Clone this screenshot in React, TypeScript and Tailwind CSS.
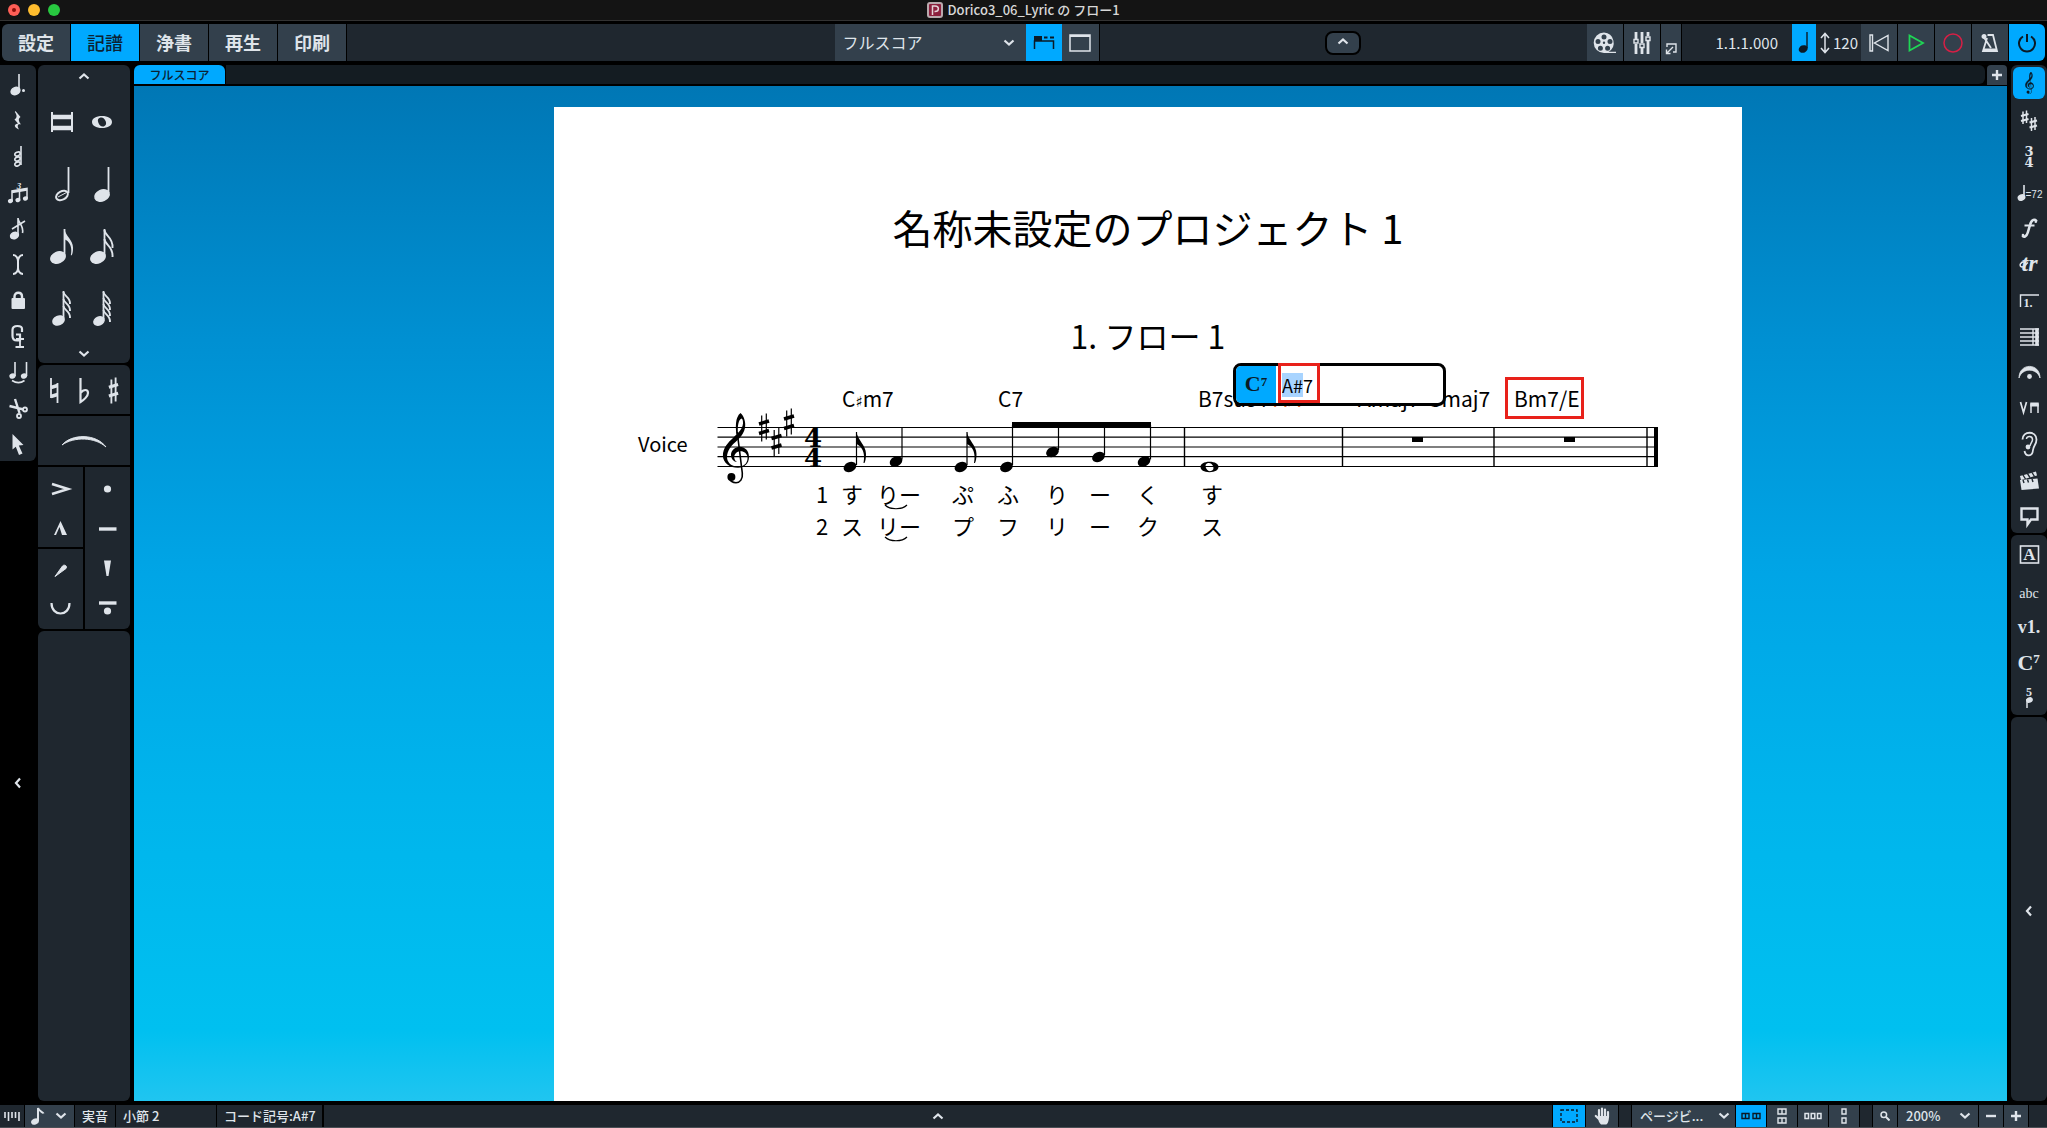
import { useEffect, useRef } from "react"
import type { ReactNode } from "react"

const CLEF =
  "M14.5 22C13.5 15 13 4 18.5 0C22 3 24 9 23 15C21.5 23 14 28 9.5 33C4.5 39 4 45 6.5 49C9 53 14 54 18 53.5C23 53 26 49 25.5 44C25 40 21.5 37.8 18 38.2C14 38.6 11.8 42 12.3 45C12.6 47 13.6 48.2 15 49C12 48.8 9 46 9 42C9 37.5 13 34 17.6 33.8C23 33.8 27 38 27 44C27 50.5 22.5 54.8 16 54.8C8 54.8 .9 50 .9 42.5C.9 35 6 29.5 11.5 24.5C16 20 20.5 16 21 10.5C21.2 8 20.5 5.5 19.5 5.5C16.5 6.5 15.3 13 16 21Z"

const FLAG = "M0 0C1 8 9.500 13 9.500 22C9.500 26 9 29 8 31L7 31C8 26 8 20 4.500 15.500C3 13.500 1 12.500 0 12Z"

function Clef() {
  return (
    <g fill="currentColor">
      <path d={CLEF} />
      <path d="M15.200 19L20.300 60C21 66 18 69.700 14 69.700C11 69.700 8 68 7.500 65" fill="none" stroke="currentColor" strokeWidth={1.6} />
      <circle cx={9.4} cy={64} r={4} />
    </g>
  )
}

function Head({ x, y, rx = 6.6, ry = 4.8 }: { x: number; y: number; rx?: number; ry?: number }) {
  return <ellipse cx={x} cy={y} rx={rx} ry={ry} transform={`rotate(-24 ${x} ${y})`} fill="currentColor" />
}

function Sharp({ x, y, s = 1, bold = false }: { x: number; y: number; s?: number; bold?: boolean }) {
  const thin = bold ? 2 : 1.2
  return (
    <g transform={`translate(${x} ${y}) scale(${s})`} stroke="currentColor" fill="none">
      <path d="M-2.300 -12V14M2.300 -14V12" strokeWidth={thin} />
      <path d="M-5 -3.500L5 -6.500M-5 6L5 3" strokeWidth={3.4} />
    </g>
  )
}

function Icon({ w = 36, h = 36, children }: { w?: number; h?: number; children: ReactNode }) {
  return (
    <svg width={w} height={h} viewBox={`0 0 ${w} ${h}`} fill="none" stroke="currentColor" strokeWidth={1.6} aria-hidden="true">
      {children}
    </svg>
  )
}

function Chevron({ d }: { d: "up" | "down" | "left" }) {
  const path = { up: "M2.500 7.500L7 3.500L11.500 7.500", down: "M2.500 4.500L7 8.500L11.500 4.500", left: "M9 2.500L5 7L9 11.500" }[d]
  return (
    <svg width={14} height={14} viewBox="0 0 14 14" fill="none" stroke="currentColor" strokeWidth={2.2} aria-hidden="true">
      <path d={path} />
    </svg>
  )
}

interface IconTextProps {
  x: number
  y: number
  size: number
  italic?: boolean
  light?: boolean
  wide?: boolean
  children: ReactNode
}

function IconText({ x, y, size, italic, light, wide, children }: IconTextProps) {
  return (
    <text
      x={x}
      y={y}
      fontSize={size}
      textAnchor="middle"
      fontWeight={light ? 400 : 700}
      fontStyle={italic ? "italic" : "normal"}
      fontFamily={wide ? '"DejaVu Serif", serif' : '"Liberation Serif", serif'}
      fill="currentColor"
      stroke="none"
    >
      {children}
    </text>
  )
}

// Note values shown in the notes panel: head, stem and n flags
function FlaggedNote({ x, y, stem, flags, rx, ry }: { x: number; y: number; stem: number; flags: number; rx: number; ry: number }) {
  const step = flags === 2 ? 9 : flags === 3 ? 7 : 6
  const hook = flags === 2 ? "M0 0C0 6 9 7 8 18" : "M0 0C0 4 7 5 6.500 12"
  return (
    <Icon w={40} h={62}>
      <Head x={x} y={y} rx={rx} ry={ry} />
      <path d={`M${stem} ${y - 2}V14`} strokeWidth={1.8} />
      {flags === 1 && <path d={FLAG} transform={`translate(${stem} 14) scale(0.9 0.85)`} fill="currentColor" stroke="none" />}
      {flags > 1 &&
        Array.from({ length: flags }, (_, i) => (
          <path key={i} d={hook} transform={`translate(${stem} ${15 + i * step})`} strokeWidth={1.9} />
        ))}
    </Icon>
  )
}

const noteValues: { label: string; icon: ReactNode }[] = [
  {
    label: "倍全音符",
    icon: (
      <Icon w={40} h={62}>
        <path d="M8 21V41M28 21V41" strokeWidth={2} />
        <path d="M8 26H28M8 37H28" strokeWidth={4.5} />
      </Icon>
    ),
  },
  {
    label: "全音符",
    icon: (
      <Icon w={40} h={62}>
        <path
          fillRule="evenodd"
          fill="currentColor"
          stroke="none"
          d="M18 25C24 25 28 27.500 28 31C28 34.500 24 37 18 37C12 37 8 34.500 8 31C8 27.500 12 25 18 25ZM16.500 26.500C14 27 13.300 29 14.300 31.500C15.300 34.500 17.500 36 19.800 35.400C22 34.800 22.600 32.500 21.700 30.300C20.600 27.500 18.700 26 16.500 26.500Z"
        />
      </Icon>
    ),
  },
  {
    label: "2分音符",
    icon: (
      <Icon w={40} h={62}>
        <ellipse cx={18} cy={42.5} rx={6.3} ry={4.2} transform="rotate(-28 18 42.500)" strokeWidth={2} />
        <path d="M14 44L22.500 39.500" strokeWidth={1} />
        <path d="M24.500 40V14" strokeWidth={1.8} />
      </Icon>
    ),
  },
  { label: "4分音符", icon: <FlaggedNote x={18} y={42.5} stem={24.5} flags={0} rx={7.4} ry={5.3} /> },
  { label: "8分音符", icon: <FlaggedNote x={14} y={42.5} stem={20.5} flags={1} rx={7.4} ry={5.3} /> },
  { label: "16分音符", icon: <FlaggedNote x={14} y={42.5} stem={20.5} flags={2} rx={7.4} ry={5.3} /> },
  { label: "32分音符", icon: <FlaggedNote x={14.5} y={43.5} stem={19.5} flags={3} rx={5.8} ry={4.2} /> },
  { label: "64分音符", icon: <FlaggedNote x={15} y={44} stem={19.5} flags={4} rx={5.3} ry={3.8} /> },
]

const toolbox: { label: string; icon: ReactNode }[] = [
  {
    label: "付点音符",
    icon: (
      <Icon>
        <Head x={15.5} y={26} rx={4.5} ry={3.4} />
        <path d="M19 25V9" />
        <circle cx={23.5} cy={25.5} r={1.5} fill="currentColor" stroke="none" />
      </Icon>
    ),
  },
  {
    label: "休符",
    icon: (
      <Icon>
        <path
          fill="currentColor"
          stroke="none"
          d="M15.500 10L20.500 16C18 18 18.500 20 21 23.500C18 22.500 16.500 24.500 19 28.500C15 27 12.500 23.500 18 22.500L14.500 18.500C17.500 16.500 17 14 14.800 11Z"
        />
      </Icon>
    ),
  },
  {
    label: "コード",
    icon: (
      <Icon>
        <path d="M21 28V9" />
        <ellipse cx={17.5} cy={17} rx={2.8} ry={1.8} transform="rotate(-24 17.500 17)" />
        <ellipse cx={17.5} cy={22} rx={2.8} ry={1.8} transform="rotate(-24 17.500 22)" />
        <ellipse cx={17.5} cy={27} rx={2.8} ry={1.8} transform="rotate(-24 17.500 27)" />
      </Icon>
    ),
  },
  {
    label: "連符",
    icon: (
      <Icon>
        <path d="M12 28V18L27 15.500V25M19.500 26.500V17" strokeWidth={1.5} />
        <path d="M12 19L27 16.500" strokeWidth={2.4} />
        <Head x={10.5} y={28} rx={1.8} ry={1.4} />
        <Head x={18} y={27} rx={1.8} ry={1.4} />
        <Head x={25.5} y={25.5} rx={1.8} ry={1.4} />
        <IconText x={19} y={15.500} size={9} italic>
          3
        </IconText>
      </Icon>
    ),
  },
  {
    label: "装飾音符",
    icon: (
      <Icon>
        <Head x={14.5} y={26.5} rx={4} ry={3} />
        <path d="M18 25V9C18 14 24 16 22.500 24M12 20L25 12" />
      </Icon>
    ),
  },
  {
    label: "キャレット",
    icon: (
      <Icon>
        <path d="M13 10C16 10 18 13 18 16V23C18 26 16 29 13 29M23 10C20 10 18 13 18 16M18 23C18 26 20 29 23 29" strokeWidth={2} />
      </Icon>
    ),
  },
  {
    label: "ロック",
    icon: (
      <Icon>
        <rect x={11.5} y={17} width={13.5} height={11} rx={1} fill="currentColor" stroke="none" />
        <path d="M14.500 19V15.500C14.500 10.500 22 10.500 22 15.500V19" strokeWidth={2.4} />
      </Icon>
    ),
  },
  {
    label: "強制デュレーション",
    icon: (
      <Icon>
        <path d="M22 15V12C22 10 20 9 17.500 9C14 9 12.500 11 12.500 13V19C12.500 22 14.500 23.500 17 23.500H20V17.500H16" strokeWidth={2.2} />
        <path d="M16 22H24M20 22V30M15.500 30H24" strokeWidth={1.8} />
      </Icon>
    ),
  },
  {
    label: "タイ",
    icon: (
      <Icon>
        <path d="M15 23V9M26.500 23V9" />
        <Head x={12.5} y={23} rx={2.4} ry={1.8} />
        <Head x={24} y={23} rx={2.4} ry={1.8} />
        <path d="M12 27.500C16 30 21 30 24.500 27.500" />
      </Icon>
    ),
  },
  {
    label: "はさみ",
    icon: (
      <Icon>
        <path d="M15 10L19.500 24M9.500 17L23.500 20.500" strokeWidth={2.4} />
        <circle cx={19} cy={27} r={2} strokeWidth={1.8} />
        <circle cx={25} cy={20.5} r={2} strokeWidth={1.8} />
      </Icon>
    ),
  },
  {
    label: "選択",
    icon: (
      <Icon>
        <path fill="currentColor" stroke="none" d="M12.500 9L23.500 20L18.800 20.500L22.500 28.500L19 30L15.800 21.800L12.500 24.500Z" />
      </Icon>
    ),
  },
]

const notations: { label: string; icon: ReactNode }[] = [
  {
    label: "調号",
    icon: (
      <Icon>
        <path d="M12 10.500V23M15.500 9.500V22M20.500 17V30M24 16V29" strokeWidth={1.5} />
        <path d="M10 15L17.500 13M10 20L17.500 18M18.500 21.500L26 19.500M18.500 26.500L26 24.500" strokeWidth={2.2} />
      </Icon>
    ),
  },
  {
    label: "拍子記号",
    icon: (
      <Icon>
        <IconText x={18} y={19} size={13} wide>
          3
        </IconText>
        <IconText x={18} y={30} size={13} wide>
          4
        </IconText>
      </Icon>
    ),
  },
  {
    label: "テンポ",
    icon: (
      <Icon>
        <Head x={10.5} y={24.5} rx={3.2} ry={2.5} />
        <path d="M13 24V12" />
        <text x={14.5} y={25} fontSize={10} fontFamily='"Liberation Sans", sans-serif' fill="currentColor" stroke="none">
          =72
        </text>
      </Icon>
    ),
  },
  {
    label: "強弱記号",
    icon: (
      <Icon>
        <path d="M25.500 12.500C24.500 9.500 20.500 10 19 16L16.800 23.500C15.500 28 12.500 28.500 11.500 26.500" strokeWidth={2.6} />
        <path d="M13.500 16.500H23.500" strokeWidth={2} />
        <circle cx={24.8} cy={12.8} r={1.3} fill="currentColor" stroke="none" />
        <circle cx={12} cy={26} r={1.3} fill="currentColor" stroke="none" />
      </Icon>
    ),
  },
  {
    label: "装飾音",
    icon: (
      <Icon>
        <IconText x={18.500} y={26} size={24} italic>
          tr
        </IconText>
        <path d="M15 17C9 16 7.500 21.500 11 22C13 22.200 14 20 17 17.500" strokeWidth={1.5} />
      </Icon>
    ),
  },
  {
    label: "反復記号",
    icon: (
      <Icon>
        <path d="M9.500 26V14H28" strokeWidth={1.4} />
        <IconText x={17} y={26} size={12}>
          1.
        </IconText>
      </Icon>
    ),
  },
  {
    label: "小節線",
    icon: (
      <Icon>
        <path d="M9 12H28M9 16H28M9 20H28M9 24H28M9 28H28M22 12V28" strokeWidth={1.4} />
        <path d="M26 11.300V28.700" strokeWidth={3.6} />
      </Icon>
    ),
  },
  {
    label: "ホールド",
    icon: (
      <Icon>
        <path d="M8 25C8 9.500 29 9.500 29 25C26 14.500 11 14.500 8 25Z" fill="currentColor" strokeWidth={0.8} />
        <circle cx={18.5} cy={23.5} r={2.4} fill="currentColor" stroke="none" />
      </Icon>
    ),
  },
  {
    label: "演奏技法",
    icon: (
      <Icon>
        <path d="M9.500 13L12.500 23.500L15.500 13" strokeWidth={1.7} />
        <path d="M20 24V14.500M27 24V14.500" strokeWidth={1.5} />
        <path d="M19.300 15.500H27.700" strokeWidth={4} />
      </Icon>
    ),
  },
  {
    label: "再生技法",
    icon: (
      <Icon>
        <path d="M11.500 14.500C11.500 5.500 25.500 5.500 25.500 14.500C25.500 19.500 22.500 20.500 22 25C21.500 32 14.500 32 13.500 26" strokeWidth={1.8} />
        <path d="M15.500 14C15.500 10.500 21.500 10.500 21.500 14.500C21.500 17 19.500 18 19 21" strokeWidth={1.5} />
        <circle cx={17} cy={22} r={2.4} fill="currentColor" stroke="none" />
      </Icon>
    ),
  },
  {
    label: "ビデオ",
    icon: (
      <Icon>
        <path fill="currentColor" stroke="none" d="M9 19L26.500 17.500L28 27.500L10.500 29Z" />
        <path d="M9.500 17L25.500 12.500" strokeWidth={4} />
        <path d="M12 14L14.500 18M16.500 12.700L19 16.700M21 11.500L23.500 15.500M12 19L13 22M16.500 18.500L17.500 21.500M21 18L22 21" strokeWidth={1.4} className="text-[#1f272f]" />
      </Icon>
    ),
  },
  {
    label: "コメント",
    icon: (
      <Icon>
        <path d="M10.500 11.500H26.500V22.500H20L16.500 27.500V22.500H10.500Z" strokeWidth={2.4} />
      </Icon>
    ),
  },
]

const textNotations: { label: string; icon: ReactNode }[] = [
  {
    label: "リハーサルマーク",
    icon: (
      <Icon>
        <rect x={9.5} y={11} width={18} height={17} />
        <IconText x={18.5} y={25} size={17}>
          A
        </IconText>
      </Icon>
    ),
  },
  {
    label: "テキスト",
    icon: (
      <Icon>
        <IconText x={18} y={27} size={14} light>
          abc
        </IconText>
      </Icon>
    ),
  },
  {
    label: "歌詞",
    icon: (
      <Icon>
        <IconText x={18} y={26} size={18}>
          v1.
        </IconText>
      </Icon>
    ),
  },
  {
    label: "コード記号",
    icon: (
      <Icon>
        <IconText x={14.500} y={27} size={22}>
          C
        </IconText>
        <IconText x={25.5} y={20} size={13}>
          7
        </IconText>
      </Icon>
    ),
  },
  {
    label: "運指",
    icon: (
      <Icon>
        <IconText x={18} y={17} size={12}>
          5
        </IconText>
        <path d="M16 29V20" strokeWidth={1.5} />
        <Head x={18.5} y={21} rx={2.6} ry={2} />
      </Icon>
    ),
  },
]

const lightBtn = "flex items-center justify-center bg-[#33404c] text-[#dfe4ea]"
const blueBtn = "flex items-center justify-center bg-[#00a9ff] text-[#0b1a26]"

function TitleBar() {
  return (
    <header className="grid h-[21px] grid-cols-3 items-center border-b border-[#333333] bg-[#141414]">
      <div className="flex gap-2 pl-2">
        <button aria-label="閉じる" className="flex size-3 items-center justify-center rounded-full bg-[#ff5f57]">
          <span className="size-1 rounded-full bg-[#8a0f0a]" />
        </button>
        <button aria-label="しまう" className="size-3 rounded-full bg-[#febc2e]" />
        <button aria-label="拡大" className="size-3 rounded-full bg-[#28c840]" />
      </div>
      <div className="flex items-center justify-center gap-1 text-[13px] leading-5 font-medium text-[#d8d8d8]">
        <svg width={16} height={16} viewBox="0 0 16 16" aria-hidden="true">
          <rect width={16} height={16} rx={3} fill="#b9a9ad" />
          <rect x={2} y={2} width={12} height={12} rx={1} fill="#8c1f3d" />
          <path d="M5.500 13V4H8C12.500 4 12.500 9.500 8 9.500H7.500" fill="none" stroke="#e3d3d8" strokeWidth={1.5} />
        </svg>
        Dorico3_06_Lyric の フロー1
      </div>
    </header>
  )
}

function Toolbar() {
  const modes = ["設定", "記譜", "浄書", "再生", "印刷"]
  return (
    <div className="mt-[3px] flex h-[37px] px-[2px]">
      <nav className="flex gap-px">
        {modes.map((mode) => (
          <button
            key={mode}
            className={`w-[68px] pb-0.5 text-lg leading-7 first:rounded-l-md ${
              mode === "記譜" ? "bg-[#00a9ff] font-medium text-[#0b2233]" : "bg-[#33404c] font-bold text-[#dfe4ea]"
            }`}
          >
            {mode}
          </button>
        ))}
      </nav>
      <div className="ml-px flex-1 bg-[#1f272f]" />
      <div className="flex">
        <div className="relative flex items-center bg-[#33404c] text-[#dfe4ea]">
          <select aria-label="レイアウト" className="h-full w-[191px] appearance-none pb-0.5 pl-2 text-base leading-6">
            <option>フルスコア</option>
          </select>
          <span className="pointer-events-none absolute right-2.5">
            <Chevron d="down" />
          </span>
        </div>
        <button aria-label="タブを表示" className={`${blueBtn} w-9`}>
          <svg width={22} height={14} viewBox="0 0 22 14" aria-hidden="true">
            <path d="M1 0H9V5H1ZM11 0.500H14.500V2.500H11ZM17 0.500H21V2.500H17Z" fill="currentColor" />
            <path d="M1.500 13V5H20.500V13" fill="none" stroke="currentColor" strokeWidth={1.5} />
          </svg>
        </button>
        <button aria-label="ウィンドウ" className={`${lightBtn} w-[37px]`}>
          <svg width={22} height={18} viewBox="0 0 22 18" fill="none" stroke="currentColor" aria-hidden="true">
            <rect x={1} y={1} width={20} height={16} strokeWidth={1.5} />
            <path d="M1 2H21" strokeWidth={2} />
          </svg>
        </button>
      </div>
      <div className="ml-px flex flex-1 items-center justify-center bg-[#1f272f]">
        <button aria-label="ツールバーを隠す" className={`${lightBtn} h-6 w-9 rounded-lg border-2 border-black`}>
          <Chevron d="up" />
        </button>
      </div>
      <div className="flex">
        <div className="flex gap-px">
          <button aria-label="ビデオ" className={`${lightBtn} w-9`}>
            <svg width={24} height={24} viewBox="0 0 24 24" aria-hidden="true">
              <path
                fill="currentColor"
                fillRule="evenodd"
                d="M11 1.500a10.300 10.300 0 1 0 0 20.600H23V20.700H15.500A10.300 10.300 0 0 0 11 1.500ZM11 3.500a2.500 2.500 0 1 1 0 5a2.500 2.500 0 0 1 0-5ZM5 8a2.500 2.500 0 1 1 0 5a2.500 2.500 0 0 1 0-5ZM17 8a2.500 2.500 0 1 1 0 5a2.500 2.500 0 0 1 0-5ZM7.400 14.700a2.500 2.500 0 1 1 0 5a2.500 2.500 0 0 1 0-5ZM14.600 14.700a2.500 2.500 0 1 1 0 5a2.500 2.500 0 0 1 0-5ZM11 10.600a1.200 1.200 0 1 0 0 2.400a1.200 1.200 0 0 0 0-2.400Z"
              />
            </svg>
          </button>
          <button aria-label="ミキサー" className={`${lightBtn} w-9`}>
            <svg width={18} height={22} viewBox="0 0 18 22" fill="none" stroke="currentColor" aria-hidden="true">
              <path d="M3 0V7M3 12V22M9 0V11M9 16V22M15 0V4M15 9V22" strokeWidth={2.8} />
              <path d="M1 7.500H5V11H1ZM7 12H11V15.500H7ZM13 5H17V8.500H13Z" strokeWidth={1.4} />
            </svg>
          </button>
          <button aria-label="別ウィンドウ" className={`${lightBtn} w-5 items-end pb-1.5`}>
            <svg width={12} height={12} viewBox="0 0 12 12" fill="none" stroke="currentColor" strokeWidth={1.4} aria-hidden="true">
              <path d="M2 4V1H11V9H8M8 4L2 10M1.500 6.500V10.500H5.500" />
            </svg>
          </button>
        </div>
        <div className="ml-px flex w-[110px] items-center justify-end bg-[#1f272f] pr-3.5 text-[15px] leading-6 text-[#dfe4ea]">1.1.1.000</div>
        <button aria-label="テンポ音価" className={`${blueBtn} w-6`}>
          <svg width={12} height={24} viewBox="0 0 12 24" aria-hidden="true">
            <Head x={5.2} y={18} rx={4.6} ry={3.7} />
            <path d="M9 17V1" stroke="currentColor" strokeWidth={1.4} />
          </svg>
        </button>
        <div className="flex w-[45px] items-center gap-[3px] bg-[#1f272f] pl-1 text-[15px] leading-6 text-[#dfe4ea]">
          <svg width={10} height={22} viewBox="0 0 10 22" fill="none" stroke="currentColor" strokeWidth={1.5} aria-hidden="true">
            <path d="M5 1.500V20.500M1 6L5 1.500L9 6M1 16L5 20.500L9 16" />
          </svg>
          120
        </div>
        <div className="flex gap-px">
          <button aria-label="先頭に戻る" className={`${lightBtn} w-9`}>
            <svg width={20} height={18} viewBox="0 0 20 18" fill="none" stroke="currentColor" strokeWidth={1.4} aria-hidden="true">
              <path d="M1 1H3.500V17H1ZM19 1.500V16.500L5.500 9Z" />
            </svg>
          </button>
          <button aria-label="再生" className={`${lightBtn} w-9`}>
            <svg width={18} height={18} viewBox="0 0 18 18" fill="none" stroke="#1fd655" strokeWidth={1.8} aria-hidden="true">
              <path d="M2.500 1.500V16.500L16 9Z" />
            </svg>
          </button>
          <button aria-label="録音" className={`${lightBtn} w-9`}>
            <svg width={20} height={20} viewBox="0 0 20 20" fill="none" stroke="#d61f45" strokeWidth={1.5} aria-hidden="true">
              <circle cx={10} cy={10} r={9} />
            </svg>
          </button>
          <button aria-label="クリック" className={`${lightBtn} w-9`}>
            <svg width={18} height={20} viewBox="0 0 18 20" fill="none" stroke="currentColor" strokeWidth={1.8} aria-hidden="true">
              <path d="M6.500 2H12L16 18H2L6 5M2 3L10 15" />
              <path d="M2 17H16" strokeWidth={3} />
              <circle cx={3} cy={3.5} r={1.6} fill="currentColor" />
            </svg>
          </button>
          <button aria-label="オーディオエンジン" className={`${blueBtn} w-9 rounded-r-md`}>
            <svg width={20} height={20} viewBox="0 0 20 20" fill="none" stroke="currentColor" strokeWidth={2} aria-hidden="true">
              <path d="M10 1V9M6 3.500A8 8 0 1 0 14 3.500" />
            </svg>
          </button>
        </div>
      </div>
    </div>
  )
}

function NotesPanel() {
  const panel = "bg-[#1f272f]"
  return (
    <aside className="ml-[2px] flex w-[92px] flex-col gap-[2px] text-[#dfe4ea]">
      <div className={`${panel} flex flex-col items-center rounded-md`}>
        <button aria-label="前の音価" className="flex h-[26px] w-full items-center justify-center">
          <Chevron d="up" />
        </button>
        <div className="grid w-20 grid-cols-2">
          {noteValues.map((n) => (
            <button key={n.label} aria-label={n.label} className="h-[62px]">
              {n.icon}
            </button>
          ))}
        </div>
        <button aria-label="次の音価" className="flex h-6 w-full items-center justify-center pt-1.5">
          <Chevron d="down" />
        </button>
      </div>
      <div className={`${panel} flex justify-center rounded-t-md`}>
        <button aria-label="ナチュラル">
          <Icon w={30} h={49}>
            <path d="M12 13V33M18.500 18V38" strokeWidth={1.8} />
            <path d="M12 22.500L18.500 20.500M12 31.500L18.500 29.500" strokeWidth={3.6} />
          </Icon>
        </button>
        <button aria-label="フラット">
          <Icon w={30} h={49}>
            <path d="M11.500 13V37C15 35 19 31 19 28C19 24 14.500 24 11.500 28" strokeWidth={2.2} />
          </Icon>
        </button>
        <button aria-label="シャープ">
          <Icon w={30} h={49}>
            <Sharp x={14.5} y={25.5} s={0.92} bold />
          </Icon>
        </button>
      </div>
      <button aria-label="スラー" className={panel}>
        <Icon w={92} h={49}>
          <path d="M24 29C34 17.500 58 17.500 68 31C57 21 36 20.500 24 29Z" fill="currentColor" strokeWidth={1} />
        </Icon>
      </button>
      <div className="flex gap-[2px]">
        <div className="flex flex-1 flex-col gap-[2px]">
          <div className={panel}>
            <button aria-label="アクセント" className="block">
              <Icon w={45} h={40}>
                <path d="M14 17L30 22L14 27" strokeWidth={2.6} />
              </Icon>
            </button>
            <button aria-label="マルカート" className="block">
              <Icon w={45} h={40}>
                <path d="M16 28L22.500 14L29 28H24L21.500 20L18 28Z" fill="currentColor" stroke="none" />
              </Icon>
            </button>
          </div>
          <div className={`${panel} rounded-bl-md`}>
            <button aria-label="ストレス" className="block">
              <Icon w={45} h={40}>
                <path d="M17 27.500L24.500 17C26 15 30 17 28 19.500Z" fill="currentColor" strokeWidth={1} />
              </Icon>
            </button>
            <button aria-label="アンストレス" className="block">
              <Icon w={45} h={40}>
                <path d="M13.500 14C13.500 28 31.500 28 31.500 14" strokeWidth={2.2} />
              </Icon>
            </button>
          </div>
        </div>
        <div className={`${panel} flex flex-1 flex-col justify-between rounded-br-md`}>
          <button aria-label="スタッカート" className="block">
            <Icon w={45} h={40}>
              <circle cx={22.5} cy={22} r={3.6} fill="currentColor" stroke="none" />
            </Icon>
          </button>
          <button aria-label="テヌート" className="block">
            <Icon w={45} h={40}>
              <path d="M14 21H31.500" strokeWidth={3.4} />
            </Icon>
          </button>
          <button aria-label="スタッカーティッシモ" className="block">
            <Icon w={45} h={40}>
              <path d="M19 12.500H26L23.500 28H21.500Z" fill="currentColor" stroke="none" />
            </Icon>
          </button>
          <button aria-label="テヌート・スタッカート" className="block">
            <Icon w={45} h={40}>
              <path d="M14 14H31.500" strokeWidth={3.4} />
              <circle cx={22.5} cy={22} r={3.6} fill="currentColor" stroke="none" />
            </Icon>
          </button>
        </div>
      </div>
      <div className={`${panel} flex-1 rounded-md`} />
    </aside>
  )
}

const staffLines = [427.5, 437.2, 447, 456.7, 466.5]

const notes = [
  { x: 850, y: 467, stemX: 856.5, top: 432, flag: true },
  { x: 896, y: 461.5, stemX: 902, top: 427, flag: false },
  { x: 961, y: 467, stemX: 967, top: 432, flag: true },
  { x: 1006.5, y: 467, stemX: 1012.5, top: 425, flag: false },
  { x: 1052.5, y: 452, stemX: 1058.5, top: 425, flag: false },
  { x: 1098.5, y: 457, stemX: 1104.5, top: 425, flag: false },
  { x: 1144, y: 461.5, stemX: 1150.5, top: 425, flag: false },
]

const chords = [
  { x: 842, text: "C♯m7" },
  { x: 998, text: "C7" },
  { x: 1198, text: "B7sus4" },
  { x: 1274, text: "A♯7", selected: true },
  { x: 1358, text: "Amaj7" },
  { x: 1427, text: "Gmaj7" },
  { x: 1514, text: "Bm7/E" },
]

const lyrics = [
  { x: 822, lines: ["1", "2"] },
  { x: 852, lines: ["す", "ス"] },
  { x: 899, lines: ["りー", "リー"] },
  { x: 963, lines: ["ぷ", "プ"] },
  { x: 1008, lines: ["ふ", "フ"] },
  { x: 1057, lines: ["り", "リ"] },
  { x: 1100, lines: ["ー", "ー"] },
  { x: 1148, lines: ["く", "ク"] },
  { x: 1212, lines: ["す", "ス"] },
]

// The accidental is set smaller, in a face whose sharp sign is narrow
function ChordText({ text }: { text: string }) {
  const [root, quality] = text.split("♯")
  if (quality === undefined) return <>{text}</>
  return (
    <>
      {root}
      <tspan fontFamily='"DejaVu Sans", sans-serif' fontSize={15}>
        ♯
      </tspan>
      {quality}
    </>
  )
}

function Score() {
  return (
    <svg viewBox="554 361 1188 200" className="block w-full" fill="currentColor">
      {staffLines.map((y) => (
        <path key={y} d={`M717.500 ${y}H1658`} stroke="currentColor" strokeWidth={1.2} />
      ))}
      <path d="M1184.500 427V467M1342.500 427V467M1494 427V467M1647 427V467" stroke="currentColor" strokeWidth={1.4} />
      <rect x={1654} y={427} width={4} height={40} />
      <g transform="translate(722 413)">
        <Clef />
      </g>
      <Sharp x={764} y={427.5} />
      <Sharp x={776.5} y={442} />
      <Sharp x={789} y={422.5} />
      <g fontFamily='"DejaVu Serif", serif' fontWeight={700} fontSize={26} textAnchor="middle">
        <text x={813} y={446.5}>
          4
        </text>
        <text x={813} y={466.5}>
          4
        </text>
      </g>
      {notes.map((n) => (
        <g key={n.x}>
          <Head x={n.x} y={n.y} />
          <path d={`M${n.stemX} ${n.y - 2}V${n.top}`} stroke="currentColor" strokeWidth={1.2} />
          {n.flag && <path d={FLAG} transform={`translate(${n.stemX} ${n.top})`} />}
        </g>
      ))}
      <rect x={1012} y={422} width={139} height={5} />
      <path
        fillRule="evenodd"
        d="M1209.500 461.800C1215 461.800 1218.500 464 1218.500 467C1218.500 470 1215 472.200 1209.500 472.200C1204 472.200 1200.500 470 1200.500 467C1200.500 464 1204 461.800 1209.500 461.800ZM1208 463C1205.500 463.500 1205 465.500 1206 468C1207 470.500 1209 471.500 1211 471C1213.500 470.500 1214 468.500 1213 466C1212 463.500 1210 462.500 1208 463Z"
      />
      <rect x={1412} y={437} width={11} height={5} />
      <rect x={1564} y={437} width={11} height={5} />
      <text x={638} y={452} fontSize={20}>
        Voice
      </text>
      <g fontSize={21}>
        {chords.map((c) => (
          <text key={c.x} x={c.x} y={407} fill={c.selected ? "#e2622a" : "currentColor"}>
            <ChordText text={c.text} />
          </text>
        ))}
      </g>
      <g fontSize={22} textAnchor="middle">
        {lyrics.map((l) => (
          <g key={l.x}>
            <text x={l.x} y={503}>
              {l.lines[0]}
            </text>
            <text x={l.x} y={535}>
              {l.lines[1]}
            </text>
          </g>
        ))}
      </g>
      <path d="M885 505C890 510 902 510 907 505M885 537C890 542 902 542 907 537" fill="none" stroke="currentColor" strokeWidth={1.2} />
    </svg>
  )
}

function ChordPopover() {
  const inputRef = useRef<HTMLInputElement>(null)

  useEffect(() => {
    inputRef.current?.focus()
    inputRef.current?.setSelectionRange(0, 2)
  }, [])

  return (
    <div className="absolute top-[2px] left-[679px] flex h-[43px] w-[213px] overflow-hidden rounded-lg border-[3px] border-black bg-white">
      <label
        htmlFor="chord"
        className="flex w-10 items-start justify-center bg-[#00a9ff] pt-1.5 font-['Liberation_Serif',serif] text-[22px] leading-6 font-bold text-[#0b1a26]"
      >
        C<span className="text-[13px] leading-5">7</span>
      </label>
      <input
        id="chord"
        ref={inputRef}
        defaultValue="A#7"
        className="min-w-0 flex-1 pl-1.5 text-lg leading-6 caret-transparent outline-none selection:bg-[#a8d4ff] selection:text-black"
      />
    </div>
  )
}

function Canvas() {
  return (
    <main className="ml-1 flex min-w-0 flex-1 flex-col">
      <div className="flex h-[21px] gap-px">
        <button className="h-[19px] w-[91px] rounded-t-md bg-[#00a9ff] text-xs leading-4 font-medium text-[#0b2233]">フルスコア</button>
        <div className="h-[19px] flex-1 rounded-r-md bg-[#141c22]" />
        <button aria-label="新規タブ" className={`${lightBtn} ml-px h-5 w-5 rounded-t-sm`}>
          <svg width={10} height={10} viewBox="0 0 10 10" stroke="currentColor" strokeWidth={2.4} aria-hidden="true">
            <path d="M5 0V10M0 5H10" />
          </svg>
        </button>
      </div>
      <div className="flex min-h-0 flex-1 justify-center overflow-hidden bg-[linear-gradient(to_bottom,#0077b5,#0090d2_25%,#00a5e6_48%,#00b4ec_70%,#00c0f0_93%,#20c5f0)] pt-[21px] pl-[155px]">
        <article className="w-[1188px] shrink-0 bg-white pt-[90px] text-black">
          <h1 className="text-center text-[40px] leading-[60px]">名称未設定のプロジェクト 1</h1>
          <h2 className="mt-[54px] mb-[2px] text-center text-[32px] leading-[48px]">1. フロー 1</h2>
          <div className="relative">
            <Score />
            <ChordPopover />
            <div className="pointer-events-none absolute top-[2px] left-[724px] h-10 w-[42px] border-[3px] border-[#e8211a]" />
            <div className="pointer-events-none absolute top-[16px] left-[951px] h-[42px] w-[79px] border-[3px] border-[#e8211a]" />
          </div>
        </article>
      </div>
    </main>
  )
}

function NotationsToolbox() {
  return (
    <aside className="ml-1 flex w-9 flex-col gap-[2px] text-[#dfe4ea]">
      <div className="rounded-md bg-[#1f272f]">
        <button aria-label="音部記号" className="m-[2px] flex size-8 items-center justify-center rounded-md bg-[#00a9ff] text-[#0b1a26]">
          <svg width={9} height={22} viewBox="0 0 28 70" stroke="currentColor" strokeWidth={1.5} aria-hidden="true">
            <Clef />
          </svg>
        </button>
        {notations.map((n) => (
          <button key={n.label} aria-label={n.label} className="block">
            {n.icon}
          </button>
        ))}
      </div>
      <div className="rounded-md bg-[#1f272f]">
        {textNotations.map((n) => (
          <button key={n.label} aria-label={n.label} className="block">
            {n.icon}
          </button>
        ))}
      </div>
      <button aria-label="右パネル" className="flex flex-1 items-center justify-center rounded-md bg-[#1f272f] pt-1">
        <Chevron d="left" />
      </button>
    </aside>
  )
}

function StatusBar() {
  const dark = "flex items-center bg-[#1f272f]"
  return (
    <footer className="mt-1 flex h-[23px] gap-px border-b border-[#4a4f55] text-[13px] leading-5 font-medium text-[#dfe4ea]">
      <button aria-label="MIDI" className={`${dark} w-6 justify-center`}>
        <svg width={16} height={9} viewBox="0 0 16 9" fill="none" stroke="currentColor" aria-hidden="true">
          <path d="M1 0V6M4.500 0V9M8 0V6M11.500 0V6M15 0V9" strokeWidth={1.6} />
        </svg>
      </button>
      <button aria-label="入力音価" className="flex w-[49px] items-center justify-between bg-[#33404c] px-1.5">
        <svg width={14} height={18} viewBox="0 0 14 18" aria-hidden="true">
          <Head x={4} y={14.5} rx={4} ry={3} />
          <path d="M7 14V1C7.500 4 12 5 12.500 6.500" fill="none" stroke="currentColor" strokeWidth={2} />
        </svg>
        <Chevron d="down" />
      </button>
      <div className={`${dark} w-10 justify-center`}>実音</div>
      <div className={`${dark} w-[100px] pl-[7px]`}>小節 2</div>
      <div className={`${dark} w-[105px] pl-[7px]`}>コード記号:A#7</div>
      <button aria-label="下パネル" className={`${dark} ml-px flex-1 justify-center pt-1`}>
        <Chevron d="up" />
      </button>
      <button aria-label="範囲選択" className={`${blueBtn} w-8`}>
        <svg width={18} height={14} viewBox="0 0 18 14" fill="none" stroke="currentColor" strokeWidth={1.4} aria-hidden="true">
          <rect x={1} y={1} width={16} height={12} strokeDasharray="3 2" />
        </svg>
      </button>
      <button aria-label="手のひらツール" className={`${lightBtn} w-8`}>
        <svg width={16} height={18} viewBox="0 0 16 18" fill="none" stroke="currentColor" strokeWidth={2.2} strokeLinecap="round" aria-hidden="true">
          <path d="M5 10V3M8 10V1.500M11 10V2.500M14 10V5M5 12L1.800 9" />
          <path d="M4 9H15C15 13 14 17 12 17.500H7C5 16 4 13 4 9Z" fill="currentColor" stroke="none" />
        </svg>
      </button>
      <div className={`${dark} w-3`} />
      <div className="relative flex items-center bg-[#33404c]">
        <select aria-label="表示" className="h-full w-[103px] appearance-none pl-2">
          <option>ページビ...</option>
        </select>
        <span className="pointer-events-none absolute right-1">
          <Chevron d="down" />
        </span>
      </div>
      <button aria-label="見開き横" className={`${blueBtn} w-[30px]`}>
        <svg width={20} height={8} viewBox="0 0 20 8" fill="none" stroke="currentColor" strokeWidth={1.4} aria-hidden="true">
          <path d="M1 1.500H8V6.500H1ZM4.500 1.500V6.500M12 1.500H19V6.500H12ZM15.500 1.500V6.500" />
        </svg>
      </button>
      <button aria-label="見開き縦" className={`${lightBtn} w-[30px]`}>
        <svg width={10} height={16} viewBox="0 0 10 16" fill="none" stroke="currentColor" strokeWidth={1.4} aria-hidden="true">
          <path d="M1 1H9V6H1ZM5 1V6M1 10H9V15H1ZM5 10V15" />
        </svg>
      </button>
      <button aria-label="単一ページ横" className={`${lightBtn} w-[30px]`}>
        <svg width={18} height={8} viewBox="0 0 18 8" fill="none" stroke="currentColor" strokeWidth={1.5} aria-hidden="true">
          <path d="M1 1.500H4.500V6.500H1ZM7.200 1.500H10.800V6.500H7.200ZM13.500 1.500H17V6.500H13.500Z" />
        </svg>
      </button>
      <button aria-label="単一ページ縦" className={`${lightBtn} w-[30px]`}>
        <svg width={6} height={16} viewBox="0 0 6 16" fill="none" stroke="currentColor" strokeWidth={1.4} aria-hidden="true">
          <path d="M1 1H5V6H1ZM1 10H5V15H1Z" />
        </svg>
      </button>
      <div className={`${dark} w-3`} />
      <button aria-label="ズーム" className={`${lightBtn} w-6`}>
        <svg width={10} height={10} viewBox="0 0 10 10" fill="none" stroke="currentColor" strokeWidth={1.5} aria-hidden="true">
          <circle cx={3.8} cy={3.8} r={2.8} />
          <path d="M6 6L9.500 9.500" strokeWidth={2} />
        </svg>
      </button>
      <div className="relative flex items-center bg-[#33404c]">
        <select aria-label="倍率" className="h-full w-20 appearance-none pl-2">
          <option>200%</option>
        </select>
        <span className="pointer-events-none absolute right-1.5">
          <Chevron d="down" />
        </span>
      </div>
      <button aria-label="縮小" className={`${lightBtn} w-6`}>
        <svg width={10} height={10} viewBox="0 0 10 10" stroke="currentColor" strokeWidth={2.4} aria-hidden="true">
          <path d="M0 5H10" />
        </svg>
      </button>
      <button aria-label="拡大表示" className={`${lightBtn} w-6`}>
        <svg width={10} height={10} viewBox="0 0 10 10" stroke="currentColor" strokeWidth={2.4} aria-hidden="true">
          <path d="M0 5H10M5 0V10" />
        </svg>
      </button>
      <div className={`${dark} w-[18px]`} />
    </footer>
  )
}

export default function App() {
  return (
    <div className="flex h-screen flex-col overflow-hidden bg-black font-['Noto_Sans_CJK_JP',sans-serif]">
      <TitleBar />
      <Toolbar />
      <div className="mt-1 flex min-h-0 flex-1">
        <aside className="flex w-9 flex-col text-[#dfe4ea]">
          <div className="rounded-r-md bg-[#1f272f]">
            {toolbox.map((t) => (
              <button key={t.label} aria-label={t.label} className="block">
                {t.icon}
              </button>
            ))}
          </div>
          <button aria-label="左パネル" className="flex flex-1 items-center justify-center pt-1">
            <Chevron d="left" />
          </button>
        </aside>
        <NotesPanel />
        <Canvas />
        <NotationsToolbox />
      </div>
      <StatusBar />
    </div>
  )
}
